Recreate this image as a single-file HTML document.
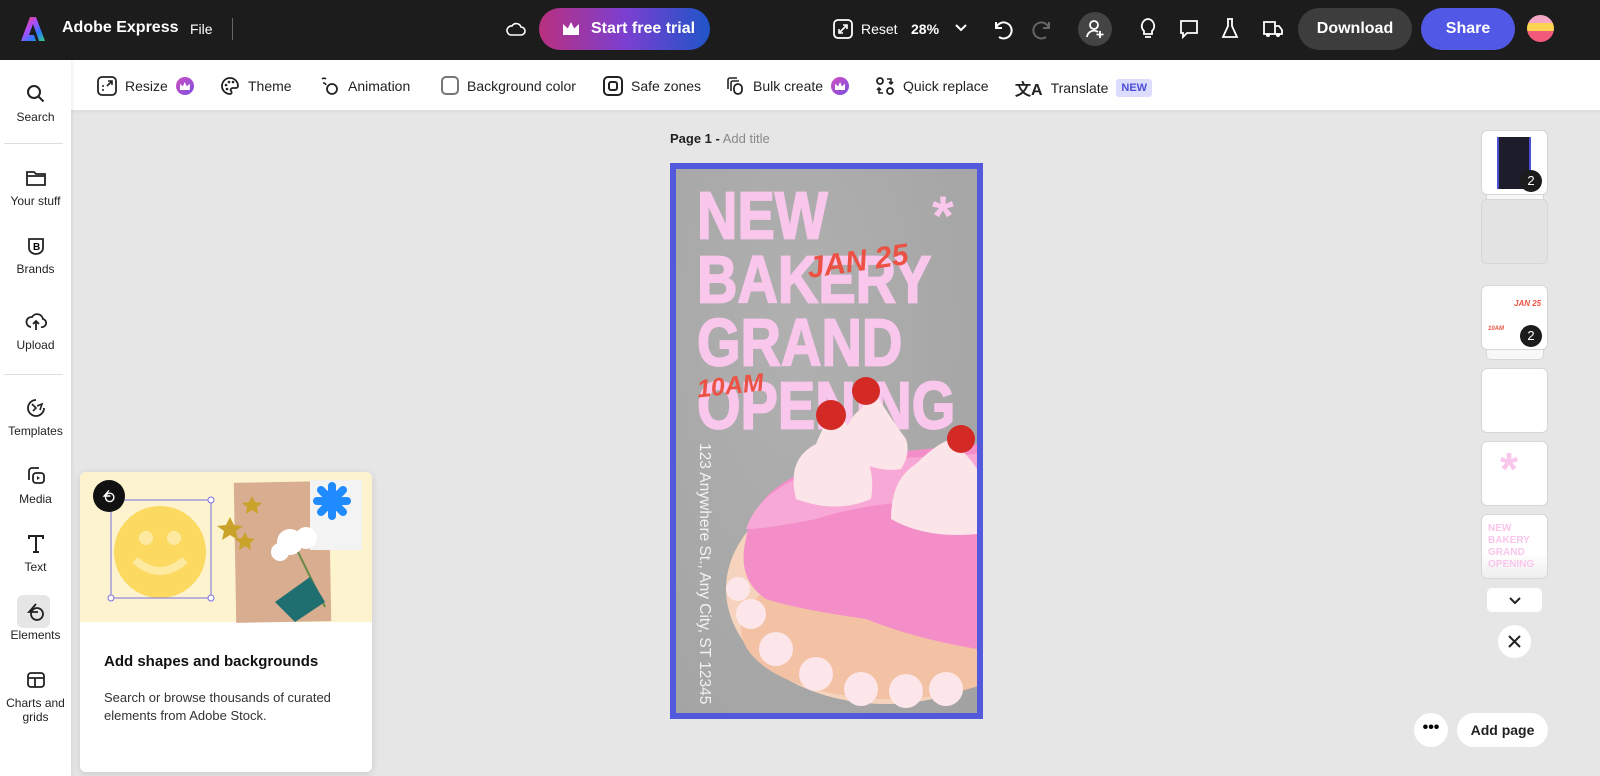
<!DOCTYPE html>
<html><head><meta charset="utf-8"><style>
*{box-sizing:border-box;margin:0;padding:0}
body{width:1600px;height:776px;overflow:hidden;background:#e6e6e6;font-family:"Liberation Sans",sans-serif;position:relative}
.top{position:absolute;left:0;top:0;width:1600px;height:60px;background:#1c1c1c;color:#fff}
.abs{position:absolute}
.tb{position:absolute;left:71px;top:60px;width:1529px;height:50px;background:#fff;font-size:14px;color:#222}
.tb .it{position:absolute;top:16px;display:flex;align-items:center;gap:8px}
.side{position:absolute;left:0;top:60px;width:71px;height:716px;background:#fff;box-shadow:1px 0 4px rgba(0,0,0,.08)}
.side .s{position:absolute;width:71px;text-align:center;font-size:12px;color:#222}
.side svg{display:block;margin:0 auto 6px}
.crown{display:inline-block;width:18px;height:18px;border-radius:50%;background:linear-gradient(135deg,#d04fc0,#7a4fe0);position:relative}
.crown:after{content:"";position:absolute;left:4px;top:5px;width:10px;height:8px;background:#fff;clip-path:polygon(0 20%,30% 55%,50% 0,70% 55%,100% 20%,100% 100%,0 100%)}
.big{position:absolute;left:21px;color:#f9c6ec;font-weight:bold;font-size:56px;line-height:1;transform:scale(1,1.2);transform-origin:0 0;-webkit-text-stroke:1.5px #f9c6ec}
.script{position:absolute;color:#ec5244;font-style:italic;font-weight:bold;font-family:"Liberation Sans",sans-serif}
.thumb{position:absolute;left:1482px;width:65px;height:63px;background:#fff;border-radius:5px;box-shadow:0 0 0 1px #d6d6d6}
.badge{position:absolute;width:22px;height:22px;border-radius:50%;background:#1c1c1c;color:#fff;font-size:13px;text-align:center;line-height:22px}
</style></head><body>
<div class="top">
 <svg class="abs" style="left:20px;top:16px" width="26" height="26" viewBox="0 0 26 26"><defs><linearGradient id="g" x1="0" y1="0" x2="1" y2="1"><stop offset="0" stop-color="#ff3c3c"/><stop offset=".4" stop-color="#b14cff"/><stop offset=".7" stop-color="#2a7bff"/><stop offset="1" stop-color="#34d17a"/></linearGradient></defs><path d="M10 1h6l9 24h-6l-6-17-4 11h5l2 6H1z" fill="url(#g)"/></svg>
 <div class="abs" style="left:62px;top:19px;font-size:16px;font-weight:bold">Adobe Express</div>
 <div class="abs" style="left:190px;top:21px;font-size:14px">File</div>
 <div class="abs" style="left:232px;top:18px;width:1px;height:22px;background:#666"></div>
 <svg class="abs" style="left:506px;top:20px" width="20" height="18" viewBox="0 0 20 18"><path d="M5 15h10a4 4 0 0 0 0-8 5 5 0 0 0-9-1 4.5 4.5 0 0 0-1 9z" fill="none" stroke="#fff" stroke-width="1.6"/></svg>
 <div class="abs" style="left:539px;top:8px;width:171px;height:42px;border-radius:21px;background:linear-gradient(90deg,#b9307f,#7c3fd0 50%,#1f55c8);font-size:16px;font-weight:bold;line-height:42px;padding-left:52px">Start free trial</div>
 <div class="abs" style="left:563px;top:22px;width:16px;height:13px;background:#fff;clip-path:polygon(0 15%,30% 50%,50% 0,70% 50%,100% 15%,100% 100%,0 100%)"></div>
 <svg class="abs" style="left:833px;top:19px" width="20" height="20" viewBox="0 0 20 20"><rect x="1" y="1" width="18" height="18" rx="4" fill="none" stroke="#fff" stroke-width="1.8"/><path d="M6 14l8-8M10 6h4v4M6 10v4h4" stroke="#fff" stroke-width="1.6" fill="none"/></svg>
 <div class="abs" style="left:861px;top:21px;font-size:14px">Reset</div>
 <div class="abs" style="left:911px;top:21px;font-size:14px;font-weight:bold">28%</div>
 <svg class="abs" style="left:955px;top:24px" width="12" height="8"><path d="M1 1l5 5 5-5" stroke="#fff" stroke-width="2" fill="none"/></svg>
 <svg class="abs" style="left:991px;top:18px" width="22" height="22" viewBox="0 0 22 22"><path d="M5 4v6h6M5 10a8 8 0 1 1 3 9" fill="none" stroke="#fff" stroke-width="2"/></svg>
 <svg class="abs" style="left:1032px;top:18px" width="22" height="22" viewBox="0 0 22 22"><path d="M17 4v6h-6M17 10a8 8 0 1 0-3 9" fill="none" stroke="#666" stroke-width="2"/></svg>
 <div class="abs" style="left:1078px;top:12px;width:34px;height:34px;border-radius:50%;background:#444"></div>
 <svg class="abs" style="left:1085px;top:18px" width="20" height="22" viewBox="0 0 20 22"><circle cx="9" cy="7" r="4" fill="none" stroke="#fff" stroke-width="1.8"/><path d="M2 19a7 7 0 0 1 11-5M15 13v7M11.5 16.5h7" stroke="#fff" stroke-width="1.8" fill="none"/></svg>
 <svg class="abs" style="left:1139px;top:17px" width="18" height="24" viewBox="0 0 18 24"><path d="M9 2a7 7 0 0 0-4 12v3h8v-3A7 7 0 0 0 9 2zM6 20h6" fill="none" stroke="#fff" stroke-width="1.8"/></svg>
 <svg class="abs" style="left:1178px;top:18px" width="22" height="22" viewBox="0 0 22 22"><path d="M3 3h16v12H9l-4 4v-4H3z" fill="none" stroke="#fff" stroke-width="1.8"/></svg>
 <svg class="abs" style="left:1221px;top:17px" width="18" height="24" viewBox="0 0 18 24"><path d="M6 2h6M7 2v7L2 20h14L11 9V2" fill="none" stroke="#fff" stroke-width="1.8"/></svg>
 <svg class="abs" style="left:1262px;top:19px" width="22" height="20" viewBox="0 0 22 20"><path d="M2 3h11v12H2zM13 7h4l3 4v4h-7" fill="none" stroke="#fff" stroke-width="1.8"/><circle cx="6" cy="16" r="2" fill="#fff"/><circle cx="16" cy="16" r="2" fill="#fff"/></svg>
 <div class="abs" style="left:1298px;top:8px;width:114px;height:42px;border-radius:21px;background:#3d3d3d;font-size:16px;font-weight:bold;text-align:center;line-height:42px">Download</div>
 <div class="abs" style="left:1421px;top:8px;width:94px;height:42px;border-radius:21px;background:#5158e6;font-size:16px;font-weight:bold;text-align:center;line-height:42px">Share</div>
 <div class="abs" style="left:1527px;top:15px;width:27px;height:27px;border-radius:50%;background:linear-gradient(180deg,#f7a7c6 0 30%,#ffd34f 30% 60%,#f25a7b 60%)"></div>
</div>

<div class="tb">
 <div class="it" style="left:26px"><svg width="20" height="20" viewBox="0 0 20 20"><rect x="1" y="1" width="18" height="18" rx="4" fill="none" stroke="#222" stroke-width="1.8"/><path d="M10 10l5-5M11 5h4v4" stroke="#222" stroke-width="1.6" fill="none"/><circle cx="6" cy="14" r="1" fill="#222"/><circle cx="6" cy="10" r="1" fill="#222"/></svg>Resize <span class="crown"></span></div>
 <div class="it" style="left:149px"><svg width="20" height="20" viewBox="0 0 20 20"><path d="M10 2a8 8 0 1 0 0 16c2 0 2-2 1-3s0-3 2-3h3a2 2 0 0 0 2-2A8 8 0 0 0 10 2z" fill="none" stroke="#222" stroke-width="1.8"/><circle cx="6" cy="9" r="1.3" fill="#222"/><circle cx="9" cy="6" r="1.3" fill="#222"/><circle cx="13" cy="6" r="1.3" fill="#222"/><circle cx="7" cy="13" r="1.3" fill="#222"/></svg>Theme</div>
 <div class="it" style="left:249px"><svg width="20" height="20" viewBox="0 0 20 20"><circle cx="12" cy="13" r="5" fill="none" stroke="#222" stroke-width="1.8"/><path d="M2 3a3 3 0 0 1 4 0M3 7a3 3 0 0 1 3 2" stroke="#222" stroke-width="1.6" fill="none"/></svg>Animation</div>
 <div class="it" style="left:370px"><span style="display:inline-block;width:18px;height:19px;border:2px solid #777;border-radius:5px"></span>Background color</div>
 <div class="it" style="left:532px"><svg width="20" height="20" viewBox="0 0 20 20"><rect x="1" y="1" width="18" height="18" rx="4" fill="none" stroke="#222" stroke-width="2"/><rect x="6" y="6" width="8" height="8" rx="2" fill="none" stroke="#222" stroke-width="2"/></svg>Safe zones</div>
 <div class="it" style="left:654px"><svg width="20" height="20" viewBox="0 0 20 20"><path d="M3 13V4a2 2 0 0 1 2-2h7M6 15V7a2 2 0 0 1 2-2h6" fill="none" stroke="#222" stroke-width="1.6"/><rect x="9" y="8" width="8" height="10" rx="4" fill="none" stroke="#222" stroke-width="1.8"/></svg>Bulk create <span class="crown"></span></div>
 <div class="it" style="left:804px"><svg width="20" height="20" viewBox="0 0 20 20"><circle cx="5" cy="5" r="3" fill="none" stroke="#222" stroke-width="1.8"/><circle cx="15" cy="15" r="3" fill="none" stroke="#222" stroke-width="1.8"/><path d="M12 3h4v5M14 6l2 2 2-2M8 17H4v-5M6 14l-2-2-2 2" fill="none" stroke="#222" stroke-width="1.6"/></svg>Quick replace</div>
 <div class="it" style="left:944px"><span style="font-weight:bold;font-size:16px">文A</span>Translate <span style="background:#dcdcff;color:#4b4fd6;font-size:11px;font-weight:bold;padding:3px 5px;border-radius:3px">NEW</span></div>
</div>
<div class="abs" style="left:71px;top:110px;width:1529px;height:4px;background:linear-gradient(#ddd,#e6e6e6)"></div>

<div class="side">
 <div class="s" style="top:24px"><svg width="20" height="20" viewBox="0 0 20 20"><circle cx="8" cy="8" r="6" fill="none" stroke="#222" stroke-width="2"/><path d="M12.5 12.5l5 5" stroke="#222" stroke-width="2"/></svg>Search</div>
 <div class="abs" style="left:4px;top:83px;width:59px;height:1px;background:#ddd"></div>
 <div class="s" style="top:108px"><svg width="22" height="20" viewBox="0 0 22 20"><path d="M2 4h7l2 2h9v11H2z M2 8h18" fill="none" stroke="#222" stroke-width="1.8"/></svg>Your stuff</div>
 <div class="s" style="top:176px"><svg width="20" height="20" viewBox="0 0 20 20"><path d="M3 3h14v9a7 6 0 0 1-14 0z" fill="none" stroke="#222" stroke-width="1.8"/><text x="7" y="14" font-size="10" font-weight="bold" font-family="Liberation Sans">B</text></svg>Brands</div>
 <div class="s" style="top:252px"><svg width="22" height="20" viewBox="0 0 22 20"><path d="M6 15a5 5 0 0 1 1-10 6 6 0 0 1 11 2 4 4 0 0 1-2 8M11 18V9M8 12l3-3 3 3" fill="none" stroke="#222" stroke-width="1.8"/></svg>Upload</div>
 <div class="abs" style="left:4px;top:314px;width:59px;height:1px;background:#ddd"></div>
 <div class="s" style="top:338px"><svg width="20" height="20" viewBox="0 0 20 20"><path d="M10 2a8 8 0 1 0 8 8" fill="none" stroke="#222" stroke-width="1.8"/><path d="M6 6l4 4-3 3M11 8l5-2-2 6" fill="none" stroke="#222" stroke-width="1.6"/></svg>Templates</div>
 <div class="s" style="top:406px"><svg width="22" height="20" viewBox="0 0 22 20"><path d="M4 14V5a3 3 0 0 1 3-3h7" fill="none" stroke="#222" stroke-width="1.8"/><rect x="8" y="7" width="11" height="10" rx="3" fill="none" stroke="#222" stroke-width="1.8"/><path d="M12 10v4l3-2z" fill="#222"/></svg>Media</div>
 <div class="s" style="top:474px"><svg width="20" height="20" viewBox="0 0 20 20"><path d="M3 5V2h14v3M10 2v16M7 18h6" fill="none" stroke="#222" stroke-width="2"/></svg>Text</div>
 <div class="abs" style="left:17px;top:535px;width:33px;height:33px;border-radius:6px;background:#e6e6e6"></div>
 <div class="s" style="top:542px"><svg width="20" height="20" viewBox="0 0 20 20"><path d="M10 2l-7 8h9" fill="none" stroke="#222" stroke-width="1.8"/><circle cx="11" cy="12" r="6" fill="none" stroke="#222" stroke-width="1.8"/></svg>Elements</div>
 <div class="s" style="top:610px"><svg width="20" height="20" viewBox="0 0 20 20"><rect x="2" y="3" width="16" height="14" rx="3" fill="none" stroke="#222" stroke-width="1.8"/><path d="M2 8h16M9 8v9" stroke="#222" stroke-width="1.8"/></svg>Charts and<br>grids</div>
</div>

<div class="abs" style="left:670px;top:131px;font-size:13px;color:#222"><b>Page 1 -</b> <span style="color:#888">Add title</span></div>

<!-- poster -->
<div class="abs" style="left:670px;top:163px;width:313px;height:556px;background:#5359dc;padding:6px">
 <div style="position:relative;width:301px;height:544px;background:radial-gradient(ellipse at 40% 30%,#b0b0b0,#a2a2a2);overflow:hidden">
  <div class="big" style="top:13px">NEW</div>
  <div class="big" style="top:77px">BAKERY</div>
  <div class="big" style="top:140px">GRAND</div>
  <div class="big" style="top:203px">OPENING</div>
  <svg class="abs" style="left:0;top:0" width="301" height="544" viewBox="0 0 301 544">
   <ellipse cx="210" cy="420" rx="160" ry="115" fill="#f6d3bd"/>
   <ellipse cx="215" cy="460" rx="150" ry="70" fill="#f3c2a5"/>
   <path d="M70 370 Q80 300 200 285 L301 275 L301 480 Q240 470 190 450 Q120 440 90 430 Q60 410 70 370z" fill="#f48ec8"/>
   <path d="M70 360 Q90 300 210 290 L301 285 L301 330 Q200 330 140 350 Q90 360 70 360z" fill="#f8a8d6"/>
   <g fill="#fde6ea">
    <circle cx="75" cy="445" r="15"/><circle cx="100" cy="480" r="17"/><circle cx="140" cy="505" r="17"/><circle cx="185" cy="520" r="17"/><circle cx="230" cy="522" r="17"/><circle cx="270" cy="520" r="17"/><circle cx="62" cy="420" r="12"/>
   </g>
   <g fill="#fbe5e8">
    <path d="M120 330 Q110 290 140 275 Q150 250 160 240 Q175 260 185 280 Q200 300 195 330 Q160 345 120 330z"/>
    <path d="M165 280 Q170 250 185 240 Q195 225 200 225 Q215 250 230 270 Q235 285 225 300 Q195 305 165 280z"/>
    <path d="M215 350 Q215 310 240 295 Q260 275 275 270 Q295 290 301 300 L301 365 Q250 370 215 350z"/>
   </g>
   <circle cx="155" cy="246" r="15" fill="#d42a25"/><circle cx="190" cy="222" r="14" fill="#d42a25"/><circle cx="285" cy="270" r="14" fill="#d42a25"/>
   <text x="256" y="66" font-size="56" fill="#f9c6ec" font-weight="bold" font-family="Liberation Sans">*</text>
  </svg>
  <div class="script" style="left:131px;top:76px;font-size:30px;transform:rotate(-8deg)">JAN 25</div>
  <div class="script" style="left:21px;top:203px;font-size:25px;transform:rotate(-6deg)">10AM</div>
  <div class="abs" style="left:37px;top:274px;transform:rotate(90deg);transform-origin:0 0;white-space:nowrap;color:#f2f2f2;font-size:15.5px">123 Anywhere St., Any City, ST 12345</div>
 </div>
</div>

<!-- right thumbnails -->
<div class="abs" style="left:1487px;top:190px;width:56px;height:14px;background:#f8f8f8;border-radius:4px;box-shadow:0 0 0 1px #d6d6d6"></div>
<div class="thumb" style="top:131px"><div class="abs" style="left:15px;top:6px;width:34px;height:52px;background:#1c1c2a;border-left:2px solid #4b4fd6;border-right:2px solid #4b4fd6"></div><div class="badge" style="left:38px;top:39px">2</div></div>
<div class="thumb" style="top:200px;background:#e3e3e3"></div>
<div class="abs" style="left:1487px;top:345px;width:56px;height:14px;background:#f8f8f8;border-radius:4px;box-shadow:0 0 0 1px #d6d6d6"></div>
<div class="thumb" style="top:286px"><div class="script" style="left:32px;top:13px;font-size:8px">JAN 25</div><div class="script" style="left:6px;top:40px;font-size:6px">10AM</div><div class="badge" style="left:38px;top:39px">2</div></div>
<div class="thumb" style="top:369px"></div>
<div class="thumb" style="top:442px"><div class="abs" style="left:18px;top:0;color:#f9c6ec;font-size:46px;font-weight:bold">*</div></div>
<div class="thumb" style="top:515px;background:linear-gradient(#fff 60%,#eee)"><div class="abs" style="left:6px;top:8px;color:#f9c6ec;font-size:10px;font-weight:bold;line-height:12px">NEW<br>BAKERY<br>GRAND<br>OPENING</div></div>
<div class="abs" style="left:1487px;top:588px;width:55px;height:24px;background:#fff;border-radius:5px"><svg class="abs" style="left:22px;top:9px" width="12" height="8"><path d="M1 1l5 5 5-5" stroke="#222" stroke-width="2" fill="none"/></svg></div>
<div class="abs" style="left:1498px;top:625px;width:33px;height:33px;border-radius:50%;background:#fff"><svg class="abs" style="left:10px;top:10px" width="13" height="13"><path d="M1 1l11 11M12 1L1 12" stroke="#222" stroke-width="2"/></svg></div>
<div class="abs" style="left:1414px;top:713px;width:34px;height:34px;border-radius:50%;background:#fff;text-align:center;font-weight:bold;font-size:16px;line-height:30px">•••</div>
<div class="abs" style="left:1457px;top:713px;width:91px;height:34px;border-radius:17px;background:#fff;text-align:center;font-size:14px;font-weight:bold;line-height:34px;color:#222">Add page</div>

<!-- bottom card -->
<div class="abs" style="left:80px;top:472px;width:292px;height:300px;background:#fff;border-radius:6px;box-shadow:0 2px 8px rgba(0,0,0,.12);overflow:hidden">
 <div style="position:relative;height:150px;background:#fdf3cf">
  <div class="abs" style="left:155px;top:10px;width:95px;height:140px;background:#d8ad90;transform:rotate(-1deg)"></div>
  <div class="abs" style="left:230px;top:8px;width:52px;height:70px;background:#f3f3f3"></div>
  <svg class="abs" style="left:0;top:0" width="292" height="150">
   <circle cx="80" cy="80" r="46" fill="#fcd960"/>
   <circle cx="66" cy="66" r="7" fill="#fde9a0"/><circle cx="94" cy="66" r="7" fill="#fde9a0"/>
   <path d="M55 88 Q80 110 105 88" stroke="#fde9a0" stroke-width="8" fill="none"/>
   <rect x="31" y="28" width="100" height="98" fill="none" stroke="#7b6fe0" stroke-width="1"/>
   <g fill="#fff" stroke="#7b6fe0"><circle cx="31" cy="126" r="3"/><circle cx="131" cy="126" r="3"/><circle cx="131" cy="28" r="3"/></g>
   <g fill="#c9a22a"><path d="M150 45l4 8 9 1-7 5 2 9-8-5-8 5 2-9-7-5 9-1z"/><path d="M165 60l3 6 7 1-5 4 1 7-6-4-6 4 1-7-5-4 7-1z"/><path d="M172 24l3 6 7 1-5 4 1 7-6-4-6 4 1-7-5-4 7-1z"/></g>
   <g fill="#fff"><circle cx="210" cy="70" r="13"/><circle cx="226" cy="66" r="11"/><circle cx="200" cy="80" r="9"/></g>
   <path d="M218 80 L245 135" stroke="#6b8a4a" stroke-width="2"/>
   <path d="M195 130 L230 105 L245 130 L215 150z" fill="#1f6f70"/>
   <g stroke="#1f8bff" stroke-width="8" stroke-linecap="round"><path d="M252 14v30M237 29h30M241 18l22 22M263 18l-22 22"/></g>
  </svg>
  <div class="abs" style="left:13px;top:8px;width:32px;height:32px;border-radius:50%;background:#111"><svg class="abs" style="left:9px;top:9px" width="14" height="14" viewBox="0 0 20 20"><path d="M10 2l-7 8h9" fill="none" stroke="#fff" stroke-width="2"/><circle cx="11" cy="12" r="6" fill="none" stroke="#fff" stroke-width="2"/></svg></div>
 </div>
 <div class="abs" style="left:24px;top:181px;font-size:15px;font-weight:bold;color:#111">Add shapes and backgrounds</div>
 <div class="abs" style="left:24px;top:217px;font-size:13px;color:#333;line-height:18px">Search or browse thousands of curated<br>elements from Adobe Stock.</div>
</div>
</body></html>
